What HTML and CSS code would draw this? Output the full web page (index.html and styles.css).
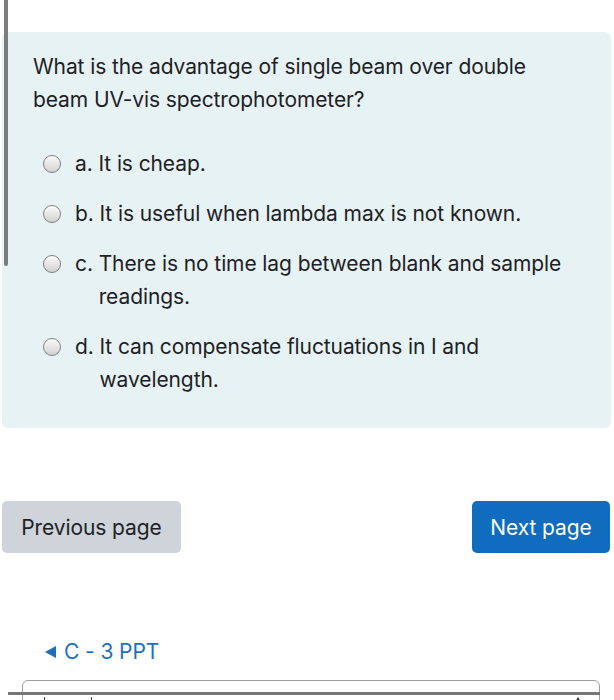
FILE: index.html
```html
<!DOCTYPE html>
<html>
<head>
<meta charset="utf-8">
<link rel="stylesheet" href="styles.css">
</head>
<body>
<div class="scroll-indicator"></div>
<div class="page">
  <div class="que">
    <div class="qtext">What is the advantage of single beam over double beam UV-vis spectrophotometer?</div>
    <div class="answers">
      <div class="opt"><span class="radio"></span><span class="num">a.&nbsp;</span><div class="atext">It is cheap.</div></div>
      <div class="opt"><span class="radio"></span><span class="num">b.&nbsp;</span><div class="atext">It is useful when lambda max is not known.</div></div>
      <div class="opt"><span class="radio"></span><span class="num">c.&nbsp;</span><div class="atext">There is no time lag between blank and sample readings.</div></div>
      <div class="opt"><span class="radio"></span><span class="num">d.&nbsp;</span><div class="atext">It can compensate fluctuations in I and wavelength.</div></div>
    </div>
  </div>
  <div class="nav">
    <button class="btn btn-prev">Previous page</button>
    <button class="btn btn-next">Next page</button>
  </div>
  <a class="back-link" href="#"><span class="tri"></span>C - 3 PPT</a>
  <div class="jump">
    <div class="jump-bar"></div>
    <div class="jump-ticks"><span class="tick t1"></span><span class="tick t2"></span><span class="caret"></span></div>
  </div>
</div>
</body>
</html>
```
FILE: styles.css
```css
html, body {
  margin: 0;
  padding: 0;
  background: #ffffff;
  overflow: hidden;
}
body {
  font-family: Inter, "Liberation Sans", sans-serif;
  color: #1d2125;
  width: 614px;
  height: 700px;
  position: relative;
}
.scroll-indicator {
  position: absolute;
  left: 4px;
  top: 0;
  width: 4px;
  height: 266px;
  background: #7d7d7d;
  border-radius: 0 0 2px 2px;
}
.page {
  padding-top: 32px;
}
.que {
  margin-left: 2px;
  width: 609px;
  box-sizing: border-box;
  background: #e7f2f5;
  border-radius: 6px;
  padding: 18px 20px 32px 31px;
}
.qtext {
  font-size: 21px;
  line-height: 33px;
  letter-spacing: -0.1px;
  padding-right: 40px;
}
.answers {
  margin-top: 31px;
  display: flex;
  flex-direction: column;
  gap: 17px;
}
.opt {
  display: flex;
  align-items: flex-start;
  font-size: 21px;
  line-height: 33px;
  letter-spacing: -0.1px;
  padding-right: 20px;
}
.radio {
  flex: none;
  width: 18px;
  height: 18px;
  box-sizing: border-box;
  border: 1px solid #7f7f7f;
  border-radius: 50%;
  background: linear-gradient(#fafafa, #d2d2d2);
  box-shadow: inset 0 1px 1px rgba(255,255,255,0.8);
  margin: 8px 14px 0 10px;
}
.num {
  flex: none;
}
.atext {
  flex: 1;
}
.nav {
  margin-top: 73px;
  display: flex;
  justify-content: space-between;
  padding: 0 4px 0 2px;
}
.btn {
  font-family: Inter, "Liberation Sans", sans-serif;
  font-size: 21px;
  letter-spacing: -0.1px;
  height: 52px;
  border: none;
  border-radius: 5px;
  padding: 0;
}
.btn-prev {
  background: #ced4da;
  color: #1d2125;
  width: 179px;
}
.btn-next {
  background: #0f6cbf;
  color: #ffffff;
  width: 138px;
}
.back-link {
  display: flex;
  align-items: center;
  margin: 85px 0 0 45px;
  width: max-content;
  font-size: 21px;
  line-height: 28px;
  color: #1e6fbb;
  text-decoration: none;
  letter-spacing: -0.1px;
}
.tri {
  width: 0;
  height: 0;
  border-top: 6px solid transparent;
  border-bottom: 6px solid transparent;
  border-right: 11px solid #1e6fbb;
  margin-right: 8px;
}
.jump {
  margin: 14px 0 0 22px;
  width: 578px;
  height: 40px;
  box-sizing: border-box;
  border: 1px solid #a0a0a0;
  border-radius: 6px;
}
.jump-bar {
  margin: 11px 0 0 -15px;
  width: 592px;
  height: 3px;
  background: #777777;
}
.jump-ticks {
  position: relative;
  height: 10px;
}
.tick {
  position: absolute;
  top: 2px;
  width: 1px;
  height: 8px;
  background: #444;
}
.t1 { left: 21px; }
.t2 { left: 68px; }
.caret {
  position: absolute;
  top: 2px;
  left: 552px;
  width: 0;
  height: 0;
  border-left: 3px solid transparent;
  border-right: 3px solid transparent;
  border-bottom: 5px solid #333;
}
```
